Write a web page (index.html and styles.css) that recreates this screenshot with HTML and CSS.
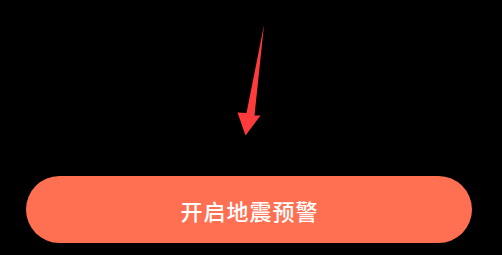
FILE: index.html
```html
<!DOCTYPE html>
<html lang="zh">
<head>
<meta charset="utf-8">
<link rel="stylesheet" href="styles.css">
</head>
<body>
<div class="screen">
  <svg class="pointer" width="502" height="176" viewBox="0 0 502 176" aria-hidden="true">
    <polygon points="264,25 254.5,115.5 260.5,115.5 245.5,135.5 237.5,112.5 246.5,113" fill="#ff3b3b"/>
  </svg>
  <div class="action">
    <button class="cta">开启地震预警</button>
  </div>
</div>
</body>
</html>
```
FILE: styles.css
```css
html, body {
  margin: 0;
  padding: 0;
  background: #000;
}
.screen {
  width: 502px;
  height: 255px;
  display: flex;
  flex-direction: column;
  overflow: hidden;
}
.pointer {
  display: block;
  flex: none;
}
.action {
  padding: 0 30px 0 26px;
}
.cta {
  display: flex;
  align-items: center;
  justify-content: center;
  width: 100%;
  height: 67px;
  border: 0;
  border-radius: 34px;
  background: #ff7052;
  color: #fff;
  font-family: "Noto Sans CJK SC", "Noto Sans", sans-serif;
  font-size: 22px;
  font-weight: 500;
  padding: 0 0 0 1px;
  letter-spacing: 1px;
}
```
